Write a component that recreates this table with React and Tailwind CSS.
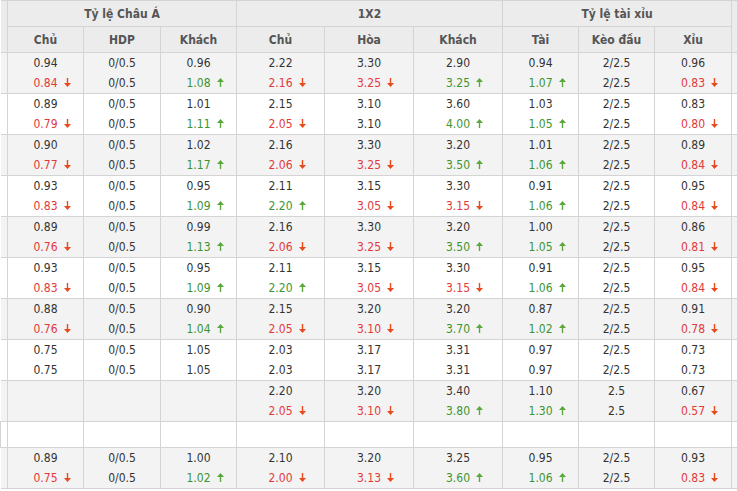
// Bảng tỷ lệ kèo: Châu Á, 1X2, tài xỉu

const rows = [
  [["0.94", "0.84", "d"], ["0/0.5", "0/0.5"], ["0.96", "1.08", "u"], ["2.22", "2.16", "d"], ["3.30", "3.25", "d"], ["2.90", "3.25", "u"], ["0.94", "1.07", "u"], ["2/2.5", "2/2.5"], ["0.96", "0.83", "d"]],
  [["0.89", "0.79", "d"], ["0/0.5", "0/0.5"], ["1.01", "1.11", "u"], ["2.15", "2.05", "d"], ["3.10", "3.10"], ["3.60", "4.00", "u"], ["1.03", "1.05", "u"], ["2/2.5", "2/2.5"], ["0.83", "0.80", "d"]],
  [["0.90", "0.77", "d"], ["0/0.5", "0/0.5"], ["1.02", "1.17", "u"], ["2.16", "2.06", "d"], ["3.30", "3.25", "d"], ["3.20", "3.50", "u"], ["1.01", "1.06", "u"], ["2/2.5", "2/2.5"], ["0.89", "0.84", "d"]],
  [["0.93", "0.83", "d"], ["0/0.5", "0/0.5"], ["0.95", "1.09", "u"], ["2.11", "2.20", "u"], ["3.15", "3.05", "d"], ["3.30", "3.15", "d"], ["0.91", "1.06", "u"], ["2/2.5", "2/2.5"], ["0.95", "0.84", "d"]],
  [["0.89", "0.76", "d"], ["0/0.5", "0/0.5"], ["0.99", "1.13", "u"], ["2.16", "2.06", "d"], ["3.30", "3.25", "d"], ["3.20", "3.50", "u"], ["1.00", "1.05", "u"], ["2/2.5", "2/2.5"], ["0.86", "0.81", "d"]],
  [["0.93", "0.83", "d"], ["0/0.5", "0/0.5"], ["0.95", "1.09", "u"], ["2.11", "2.20", "u"], ["3.15", "3.05", "d"], ["3.30", "3.15", "d"], ["0.91", "1.06", "u"], ["2/2.5", "2/2.5"], ["0.95", "0.84", "d"]],
  [["0.88", "0.76", "d"], ["0/0.5", "0/0.5"], ["0.90", "1.04", "u"], ["2.15", "2.05", "d"], ["3.20", "3.10", "d"], ["3.20", "3.70", "u"], ["0.87", "1.02", "u"], ["2/2.5", "2/2.5"], ["0.91", "0.78", "d"]],
  [["0.75", "0.75"], ["0/0.5", "0/0.5"], ["1.05", "1.05"], ["2.03", "2.03"], ["3.17", "3.17"], ["3.31", "3.31"], ["0.97", "0.97"], ["2/2.5", "2/2.5"], ["0.73", "0.73"]],
  [null, null, null, ["2.20", "2.05", "d"], ["3.20", "3.10", "d"], ["3.40", "3.80", "u"], ["1.10", "1.30", "u"], ["2.5", "2.5"], ["0.67", "0.57", "d"]],
  "empty",
  [["0.89", "0.75", "d"], ["0/0.5", "0/0.5"], ["1.00", "1.02", "u"], ["2.10", "2.00", "d"], ["3.20", "3.13", "d"], ["3.25", "3.60", "u"], ["0.95", "1.06", "u"], ["2/2.5", "2/2.5"], ["0.93", "0.83", "d"]],
];

const widths = [7, 76, 77, 76, 88, 89, 89, 76, 76, 77, 6];

function Arrow({ dir }) {
  const color = dir === "u" ? "#5aa83c" : "#e8491d";
  return (
    <svg
      width="7"
      height="9"
      viewBox="0 0 7 9"
      className="absolute top-[5px] left-[calc(100%+6px)]"
    >
      {dir === "u" ? (
        <>
          <path d="M3.5 0 L7 4 L0 4 Z" fill={color} />
          <rect x="2.8" y="3" width="1.4" height="6" fill={color} />
        </>
      ) : (
        <>
          <path d="M3.5 9 L7 5 L0 5 Z" fill={color} />
          <rect x="2.8" y="0" width="1.4" height="6" fill={color} />
        </>
      )}
    </svg>
  );
}

function Cell({ data }) {
  if (!data) return <td className="border border-[#d4d4d4]" />;
  const [top, bottom, dir] = data;
  const color = dir === "u" ? "text-[#3d9431]" : dir === "d" ? "text-[#e2393a]" : "text-[#333]";
  return (
    <td className="border border-[#d4d4d4] text-center align-middle">
      <div className="leading-[20px] text-[#333]">{top}</div>
      <div className="leading-[20px]">
        <span className={`relative inline-block ${color}`}>
          {bottom}
          {dir && <Arrow dir={dir} />}
        </span>
      </div>
    </td>
  );
}

export default function App() {
  return (
    <div
      className="w-[737px] h-[491px] bg-white overflow-hidden text-[12px]"
      style={{ fontFamily: '"DejaVu Sans Condensed", Tahoma, "DejaVu Sans", sans-serif' }}
    >
      <table className="table-fixed border-collapse w-[737px]">
        <colgroup>
          {widths.map((w, i) => (
            <col key={i} style={{ width: w }} />
          ))}
        </colgroup>
        <thead>
          <tr className="h-[26px] bg-[#ececec] text-[#555] font-bold">
            <th rowSpan={2} className="border border-[#d4d4d4] border-l-0" />
            <th colSpan={3} className="border border-[#d4d4d4] font-bold">Tỷ lệ Châu Á</th>
            <th colSpan={3} className="border border-[#d4d4d4] font-bold">1X2</th>
            <th colSpan={3} className="border border-[#d4d4d4] font-bold">Tỷ lệ tài xỉu</th>
            <th rowSpan={2} className="border border-[#d4d4d4] border-r-0" />
          </tr>
          <tr className="h-[26px] bg-[#ececec] text-[#555]">
            {["Chủ", "HDP", "Khách", "Chủ", "Hòa", "Khách", "Tài", "Kèo đầu", "Xỉu"].map((h, i) => (
              <th key={i} className="border border-[#d4d4d4] font-bold">
                {h}
              </th>
            ))}
          </tr>
        </thead>
        <tbody>
          {rows.map((r, i) => {
            const bg = i % 2 === 0 ? "bg-[#f3f3f3]" : "bg-white";
            if (r === "empty") {
              return (
                <tr key={i} className={`h-[26px] ${bg}`}>
                  {widths.map((_, j) => (
                    <td key={j} className="border border-[#d4d4d4]" />
                  ))}
                </tr>
              );
            }
            return (
              <tr key={i} className={`h-[41px] ${bg}`}>
                <td className="border border-[#d4d4d4] border-l-0" />
                {r.map((c, j) => (
                  <Cell key={j} data={c} />
                ))}
                <td className="border border-[#d4d4d4] border-r-0" />
              </tr>
            );
          })}
        </tbody>
      </table>
    </div>
  );
}
